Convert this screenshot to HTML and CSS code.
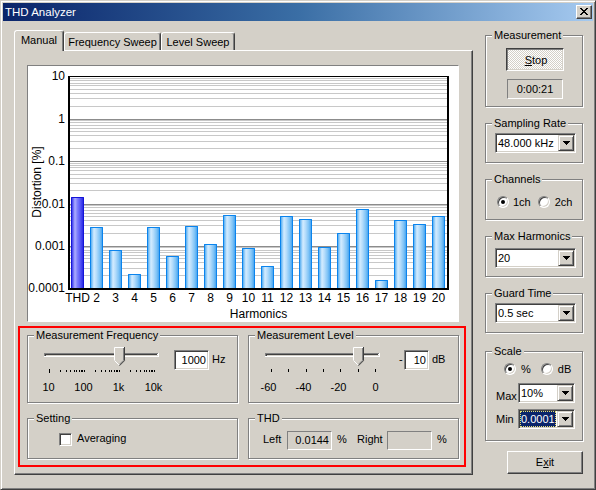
FILE: index.html
```html
<!DOCTYPE html>
<html lang="en">
<head>
<meta charset="utf-8">
<title>THD Analyzer</title>
<link rel="stylesheet" href="styles.css">
</head>
<body>
<div class="window">
  <div class="titlebar">
    <span class="title">THD Analyzer</span>
    <span class="close"><svg width="8" height="7" viewBox="0 0 8 7" shape-rendering="crispEdges"><path d="M0 0h2v1H0zM6 0h2v1H6zM1 1h2v1H1zM5 1h2v1H5zM2 2h4v1H2zM3 3h2v1H3zM2 4h4v1H2zM1 5h2v1H1zM5 5h2v1H5zM0 6h2v1H0zM6 6h2v1H6z" fill="#000"/></svg></span>
  </div>
  <div class="client">
    <div class="main">
      <div class="tabs">
        <div class="tab active">Manual</div>
        <div class="tab tab-fs">Frequency Sweep</div>
        <div class="tab tab-ls">Level Sweep</div>
      </div>
      <div class="panel">
        <div class="chart">
          <div class="ylabel" style="top:3px">10</div>
          <div class="ylabel" style="top:46px">1</div>
          <div class="ylabel" style="top:88px">0.1</div>
          <div class="ylabel" style="top:131px">0.01</div>
          <div class="ylabel" style="top:173px">0.001</div>
          <div class="ylabel" style="top:215px">0.0001</div>
          <div class="ytitle">Distortion [%]</div>
          <div class="plot">
            <svg class="grid" width="377" height="211" viewBox="0 0 377 211">
              <path stroke="#c8c8c8" stroke-width="1" fill="none" d="M0 1.5H377M0 3.5H377M0 6.5H377M0 8.5H377M0 12.5H377M0 16.5H377M0 21.5H377M0 29.5H377M0 43.5H377M0 45.5H377M0 48.5H377M0 51.5H377M0 54.5H377M0 58.5H377M0 64.5H377M0 71.5H377M0 86.5H377M0 88.5H377M0 90.5H377M0 93.5H377M0 97.5H377M0 101.5H377M0 106.5H377M0 113.5H377M0 128.5H377M0 130.5H377M0 133.5H377M0 136.5H377M0 139.5H377M0 143.5H377M0 148.5H377M0 156.5H377M0 170.5H377M0 173.5H377M0 175.5H377M0 178.5H377M0 181.5H377M0 185.5H377M0 191.5H377M0 198.5H377"/>
              <path stroke="#8c8c8c" stroke-width="1" fill="none" d="M0 42.5H377M0 84.5H377M0 127.5H377M0 169.5H377"/>
            </svg>
            <div class="bars">
              <div class="bar thd" style="height:91px"></div>
              <div class="bar" style="height:61px"></div>
              <div class="bar" style="height:38px"></div>
              <div class="bar" style="height:14px"></div>
              <div class="bar" style="height:61px"></div>
              <div class="bar" style="height:32px"></div>
              <div class="bar" style="height:62px"></div>
              <div class="bar" style="height:44px"></div>
              <div class="bar" style="height:73px"></div>
              <div class="bar" style="height:40px"></div>
              <div class="bar" style="height:22px"></div>
              <div class="bar" style="height:72px"></div>
              <div class="bar" style="height:69px"></div>
              <div class="bar" style="height:41px"></div>
              <div class="bar" style="height:55px"></div>
              <div class="bar" style="height:79px"></div>
              <div class="bar" style="height:8px"></div>
              <div class="bar" style="height:68px"></div>
              <div class="bar" style="height:64px"></div>
              <div class="bar" style="height:72px"></div>
            </div>
          </div>
          <div class="xlabels">
            <span class="xl"><span>THD</span></span>
            <span class="xl"><span>2</span></span>
            <span class="xl"><span>3</span></span>
            <span class="xl"><span>4</span></span>
            <span class="xl"><span>5</span></span>
            <span class="xl"><span>6</span></span>
            <span class="xl"><span>7</span></span>
            <span class="xl"><span>8</span></span>
            <span class="xl"><span>9</span></span>
            <span class="xl"><span>10</span></span>
            <span class="xl"><span>11</span></span>
            <span class="xl"><span>12</span></span>
            <span class="xl"><span>13</span></span>
            <span class="xl"><span>14</span></span>
            <span class="xl"><span>15</span></span>
            <span class="xl"><span>16</span></span>
            <span class="xl"><span>17</span></span>
            <span class="xl"><span>18</span></span>
            <span class="xl"><span>19</span></span>
            <span class="xl"><span>20</span></span>
          </div>
          <div class="xtitle">Harmonics</div>
        </div>

        <div class="redbox">
          <div class="group rowgroup g-freq">
            <span class="legend">Measurement Frequency</span>
            <div class="slidercol">
              <svg class="slider" width="130" height="30" viewBox="0 0 130 30" shape-rendering="crispEdges">
                <rect x="4" y="8" width="115" height="4" fill="#fff"/>
                <rect x="4" y="8" width="114" height="1" fill="#808080"/>
                <rect x="4" y="8" width="1" height="3" fill="#808080"/>
                <rect x="5" y="9" width="112" height="1" fill="#404040"/>
                <rect x="5" y="9" width="1" height="2" fill="#404040"/>
                <rect x="6" y="10" width="112" height="1" fill="#d4d0c8"/>
                <path fill="#000" d="M9 24h1v4H9zM20 25h1v2h-1zM26 25h1v2h-1zM30 25h1v2h-1zM34 25h1v2h-1zM36 25h1v2h-1zM39 25h1v2h-1zM41 25h1v2h-1zM42 25h1v2h-1zM44 25h1v2h-1zM55 25h1v2h-1zM61 25h1v2h-1zM65 25h1v2h-1zM69 25h1v2h-1zM71 25h1v2h-1zM74 25h1v2h-1zM76 25h1v2h-1zM77 25h1v2h-1zM79 25h1v2h-1zM90 25h1v2h-1zM96 25h1v2h-1zM100 25h1v2h-1zM104 25h1v2h-1zM106 25h1v2h-1zM109 25h1v2h-1zM111 25h1v2h-1zM112 25h1v2h-1zM114 25h1v2h-1z"/>
                <g shape-rendering="auto">
                  <path d="M74 2h11v13.5l-5.5 5.5-5.5-5.5z" fill="#d4d0c8"/>
                  <path d="M74.5 15.5V2.5H84" stroke="#fff" fill="none"/>
                  <path d="M74.8 15.8l4.5 4.5" stroke="#fff" fill="none"/>
                  <path d="M84.5 2v13.7l-5 5" stroke="#404040" fill="none"/>
                  <path d="M83.5 3v12.3l-4 4" stroke="#808080" fill="none"/>
                </g>
              </svg>
              <div class="ticklabels tl-freq"><span>10</span><span>100</span><span>1k</span><span>10k</span></div>
            </div>
            <div class="edit e-freq">1000</div>
            <span class="unit">Hz</span>
          </div>

          <div class="group rowgroup g-level">
            <span class="legend">Measurement Level</span>
            <div class="slidercol">
              <svg class="slider" width="130" height="30" viewBox="0 0 130 30" shape-rendering="crispEdges">
                <rect x="4" y="8" width="115" height="4" fill="#fff"/>
                <rect x="4" y="8" width="114" height="1" fill="#808080"/>
                <rect x="4" y="8" width="1" height="3" fill="#808080"/>
                <rect x="5" y="9" width="112" height="1" fill="#404040"/>
                <rect x="5" y="9" width="1" height="2" fill="#404040"/>
                <rect x="6" y="10" width="112" height="1" fill="#d4d0c8"/>
                <path fill="#000" d="M10 24h1v3h-1zM27 24h1v3h-1zM45 24h1v3h-1zM62 24h1v3h-1zM79 24h1v3h-1zM97 24h1v3h-1zM114 24h1v3h-1z"/>
                <g shape-rendering="auto">
                  <path d="M92 2h11v13.5l-5.5 5.5-5.5-5.5z" fill="#d4d0c8"/>
                  <path d="M92.5 15.5V2.5H102" stroke="#fff" fill="none"/>
                  <path d="M92.8 15.8l4.5 4.5" stroke="#fff" fill="none"/>
                  <path d="M102.5 2v13.7l-5 5" stroke="#404040" fill="none"/>
                  <path d="M101.5 3v12.3l-4 4" stroke="#808080" fill="none"/>
                </g>
              </svg>
              <div class="ticklabels tl-level"><span class="neg">-60</span><span class="neg">-40</span><span class="neg">-20</span><span>0</span></div>
            </div>
            <span class="minus">-</span>
            <div class="edit e-level">10</div>
            <span class="unit">dB</span>
          </div>

          <div class="group rowgroup g-set">
            <span class="legend">Setting</span>
            <span class="check"></span>
            <span class="clabel">Averaging</span>
          </div>

          <div class="group rowgroup g-thd">
            <span class="legend">THD</span>
            <span class="tlabel t-left">Left</span>
            <div class="field">0.0144</div>
            <span class="pct">%</span>
            <span class="tlabel t-right">Right</span>
            <div class="field"></div>
            <span class="pct">%</span>
          </div>
        </div>
      </div>
    </div>

    <div class="side">
      <div class="group g-meas">
        <span class="legend">Measurement</span>
        <div class="stop"><u>S</u>top</div>
        <div class="timer">0:00:21</div>
      </div>

      <div class="group g-rate">
        <span class="legend">Sampling Rate</span>
        <div class="combo c-wide"><div class="cval">48.000 kHz</div><div class="drop"><svg width="7" height="4" viewBox="0 0 7 4" shape-rendering="crispEdges"><path d="M0 0h7v1h-1v1h-1v1h-1v1h-1v-1h-1v-1h-1v-1h-1z" fill="#000"/></svg></div></div>
      </div>

      <div class="group g-chan">
        <span class="legend">Channels</span>
        <div class="radios r-chan">
          <span class="radio on"></span><span class="rlabel">1ch</span>
          <span class="radio r2"></span><span class="rlabel">2ch</span>
        </div>
      </div>

      <div class="group g-maxh">
        <span class="legend">Max Harmonics</span>
        <div class="combo c-wide"><div class="cval">20</div><div class="drop"><svg width="7" height="4" viewBox="0 0 7 4" shape-rendering="crispEdges"><path d="M0 0h7v1h-1v1h-1v1h-1v1h-1v-1h-1v-1h-1v-1h-1z" fill="#000"/></svg></div></div>
      </div>

      <div class="group g-guard">
        <span class="legend">Guard Time</span>
        <div class="combo c-wide"><div class="cval">0.5 sec</div><div class="drop"><svg width="7" height="4" viewBox="0 0 7 4" shape-rendering="crispEdges"><path d="M0 0h7v1h-1v1h-1v1h-1v1h-1v-1h-1v-1h-1v-1h-1z" fill="#000"/></svg></div></div>
      </div>

      <div class="group g-scale">
        <span class="legend">Scale</span>
        <div class="radios r-scale">
          <span class="radio on"></span><span class="rlabel">%</span>
          <span class="radio r2"></span><span class="rlabel">dB</span>
        </div>
        <div class="srow s-max">
          <span class="slabel">Max</span>
          <div class="combo c-narrow"><div class="cval">10%</div><div class="drop"><svg width="7" height="4" viewBox="0 0 7 4" shape-rendering="crispEdges"><path d="M0 0h7v1h-1v1h-1v1h-1v1h-1v-1h-1v-1h-1v-1h-1z" fill="#000"/></svg></div></div>
        </div>
        <div class="srow s-min">
          <span class="slabel">Min</span>
          <div class="combo c-narrow"><div class="cval"><span class="sel">0.0001</span></div><div class="drop"><svg width="7" height="4" viewBox="0 0 7 4" shape-rendering="crispEdges"><path d="M0 0h7v1h-1v1h-1v1h-1v1h-1v-1h-1v-1h-1v-1h-1z" fill="#000"/></svg></div></div>
        </div>
      </div>

      <div class="btn exit">E<u>x</u>it</div>
    </div>
  </div>
</div>
</body>
</html>
```

FILE: styles.css
```css
html, body {
  margin: 0;
  padding: 0;
  background: #d4d0c8;
}

.window {
  width: 596px;
  height: 490px;
  box-sizing: border-box;
  border: 1px solid;
  border-color: #d4d0c8 #404040 #404040 #d4d0c8;
  box-shadow: inset 1px 1px 0 #fff, inset -1px -1px 0 #808080;
  padding: 2px;
  background: #d4d0c8;
  font-family: "Liberation Sans", Arial, sans-serif;
  font-size: 11px;
  line-height: 13px;
  color: #000;
}

/* title bar */
.titlebar {
  height: 18px;
  display: flex;
  align-items: center;
  padding: 0 1px 0 2px;
  background: linear-gradient(90deg, #0a246a 0%, #3a6ea5 50%, #a6caf0 100%);
  color: #fff;
}
.title {
  flex: 1;
  font-size: 11.5px;
  line-height: 18px;
  white-space: nowrap;
}
.close {
  width: 16px;
  height: 14px;
  box-sizing: border-box;
  border: 1px solid;
  border-color: #fff #404040 #404040 #fff;
  box-shadow: inset -1px -1px 0 #808080;
  background: #d4d0c8;
  display: flex;
  align-items: center;
  justify-content: center;
  padding-bottom: 1px;
}
.close svg { display: block; }

/* client area */
.client {
  display: flex;
  align-items: flex-start;
  gap: 12px;
  padding: 9px 0 0 11px;
}
.main { width: 459px; }

/* tabs */
.tabs {
  display: flex;
  align-items: flex-end;
  height: 20px;
}
.tab {
  box-sizing: border-box;
  height: 18px;
  border: 1px solid;
  border-bottom: none;
  border-color: #fff #404040 transparent #fff;
  border-radius: 3px 3px 0 0;
  box-shadow: inset -1px 0 0 #808080;
  background: #d4d0c8;
  text-align: center;
  padding-top: 3px;
  white-space: nowrap;
}
.tab.active {
  width: 50px;
  height: 21px;
  margin-bottom: -1px;
  position: relative;
  z-index: 1;
}
.tab-fs { width: 97px; }
.tab-ls { width: 74px; }

.panel {
  width: 459px;
  height: 425px;
  box-sizing: border-box;
  border: 1px solid;
  border-color: #fff #404040 #404040 #fff;
  box-shadow: inset -1px -1px 0 #808080;
  overflow: hidden;
}

/* chart */
.chart {
  position: relative;
  width: 432px;
  height: 257px;
  box-sizing: border-box;
  margin: 14px 0 0 12px;
  border: 1px solid;
  border-color: #808080 #fff #fff #808080;
  background: #fff;
  font-size: 12px;
  line-height: 14px;
  overflow: hidden;
}
.ylabel {
  position: absolute;
  left: 0;
  width: 37px;
  text-align: right;
  white-space: nowrap;
}
.ytitle {
  position: absolute;
  left: 9px;
  top: 116px;
  white-space: nowrap;
  transform: translate(-50%, -50%) rotate(-90deg);
}
.plot {
  position: relative;
  width: 381px;
  height: 214px;
  box-sizing: border-box;
  margin: 10px 0 0 40px;
  border: 2px solid #000;
  border-top-width: 1px;
}
.grid {
  position: absolute;
  left: 0;
  top: 0;
  display: block;
}
.bars {
  position: relative;
  height: 211px;
  display: flex;
  align-items: flex-end;
  gap: 6px;
  padding-left: 1px;
}
.bar {
  width: 13px;
  flex-shrink: 0;
  box-sizing: border-box;
  border: 1px solid #0a84ee;
  border-bottom: none;
  border-radius: 1px 1px 0 0;
  background: linear-gradient(90deg, #58aef0 0%, #d4ecff 27%, #b4dcfb 50%, #7cc2f6 80%, #4aa4ee 100%);
}
.bar.thd {
  border-color: #1414d8;
  background: linear-gradient(90deg, #3a3aee 0%, #acacff 27%, #7c7cfc 50%, #4e4ef4 80%, #2a2ae2 100%);
}
.xlabels {
  display: flex;
  gap: 6px;
  margin: 1px 0 0 43px;
}
.xl {
  width: 13px;
  flex-shrink: 0;
  display: flex;
  justify-content: center;
  white-space: nowrap;
}
.xtitle {
  width: 381px;
  margin: 2px 0 0 40px;
  text-align: center;
}

/* red highlight box */
.redbox {
  width: 448px;
  height: 141px;
  box-sizing: border-box;
  margin: 4px 0 0 3px;
  border: 2px solid #ff0000;
  padding: 7px 0 0 7px;
  display: grid;
  grid-template-columns: 211px 211px;
  grid-template-rows: 68px 41px;
  column-gap: 10px;
  row-gap: 15px;
}

/* group boxes */
.group {
  position: relative;
  box-sizing: border-box;
  border: 1px solid #808080;
  box-shadow: inset 1px 1px 0 #fff, 1px 1px 0 #fff;
}
.legend {
  position: absolute;
  top: -7px;
  left: 6px;
  padding: 0 2px;
  background: #d4d0c8;
  white-space: nowrap;
}
.rowgroup {
  display: flex;
  align-items: flex-start;
}

/* sliders */
.slidercol {
  width: 130px;
  margin: 9px 0 0 12px;
  flex-shrink: 0;
}
.slider { display: block; }
.ticklabels {
  display: flex;
  margin-top: 6px;
}
.ticklabels span {
  width: 35px;
  flex-shrink: 0;
  text-align: center;
  box-sizing: border-box;
}
.tl-freq { margin-left: -9px; }
.tl-level { margin-left: -8px; }
.ticklabels .neg { padding-right: 4px; }

.edit {
  box-sizing: border-box;
  height: 20px;
  margin-top: 14px;
  border: 1px solid;
  border-color: #808080 #fff #fff #808080;
  box-shadow: inset 1px 1px 0 #404040, inset -1px -1px 0 #d4d0c8;
  background: #fff;
  line-height: 18px;
  text-align: right;
  padding-right: 2px;
}
.e-freq { width: 35px; margin-left: 4px; }
.e-level { width: 25px; margin-left: 1px; }
.unit {
  margin: 17px 0 0 3px;
}
.minus {
  width: 4px;
  margin: 17px 0 0 8px;
}

/* setting */
.check {
  width: 13px;
  height: 13px;
  box-sizing: border-box;
  margin: 14px 0 0 31px;
  border: 1px solid;
  border-color: #808080 #fff #fff #808080;
  box-shadow: inset 1px 1px 0 #404040, inset -1px -1px 0 #d4d0c8;
  background: #fff;
}
.clabel {
  margin: 13px 0 0 5px;
}

/* THD readout */
.tlabel {
  margin-top: 14px;
  white-space: nowrap;
}
.t-left { width: 24px; margin-left: 14px; }
.t-right { width: 30px; margin-left: 12px; }
.field {
  width: 45px;
  height: 19px;
  box-sizing: border-box;
  margin-top: 12px;
  border: 1px solid;
  border-color: #808080 #fff #fff #808080;
  background: #d4d0c8;
  line-height: 17px;
  text-align: right;
  padding-right: 2px;
}
.pct {
  width: 8px;
  margin: 14px 0 0 5px;
}

/* right column */
.side {
  width: 98px;
  margin-top: 5px;
}
.g-meas { height: 72px; }
.g-rate { height: 40px; margin-top: 16px; }
.g-chan { height: 41px; margin-top: 16px; }
.g-maxh { height: 41px; margin-top: 16px; }
.g-guard { height: 40px; margin-top: 16px; }
.g-scale { height: 90px; margin-top: 18px; }

.stop {
  width: 58px;
  height: 23px;
  box-sizing: border-box;
  margin: 12px 0 0 20px;
  border: 1px solid;
  border-color: #404040 #fff #fff #404040;
  box-shadow: inset 1px 1px 0 #808080, inset -1px -1px 0 #d4d0c8;
  background: repeating-conic-gradient(#ffffff 0 25%, #d4d0c8 0 50%) 0 0 / 2px 2px;
  text-align: center;
  padding: 5px 0 0 2px;
}
.timer {
  width: 56px;
  height: 20px;
  box-sizing: border-box;
  margin: 8px 0 0 21px;
  border: 1px solid;
  border-color: #808080 #fff #fff #808080;
  text-align: center;
  padding-top: 3px;
}

.combo {
  display: flex;
  height: 20px;
  box-sizing: border-box;
  border: 1px solid;
  border-color: #808080 #fff #fff #808080;
  box-shadow: inset 1px 1px 0 #404040, inset -1px -1px 0 #d4d0c8;
  padding: 1px;
  background: #fff;
}
.c-wide { width: 81px; margin-left: 9px; }
.g-rate .combo { margin-top: 9px; }
.g-maxh .combo { margin-top: 11px; }
.g-guard .combo { margin-top: 9px; }
.c-narrow { width: 57px; }
.cval {
  flex: 1;
  min-width: 0;
  overflow: hidden;
  white-space: nowrap;
  line-height: 16px;
  padding-left: 1px;
}
.cval .sel {
  display: block;
  margin-left: -1px;
  margin-right: 1px;
  padding-left: 1px;
  background: #0a246a;
  color: #fff;
  outline: 1px dotted #e8e070;
  outline-offset: -1px;
}
.drop {
  width: 16px;
  height: 16px;
  flex-shrink: 0;
  box-sizing: border-box;
  border: 1px solid;
  border-color: #d4d0c8 #404040 #404040 #d4d0c8;
  box-shadow: inset 1px 1px 0 #fff, inset -1px -1px 0 #808080;
  background: #d4d0c8;
  display: flex;
  align-items: center;
  justify-content: center;
}
.drop svg { display: block; }

.radios {
  display: flex;
  align-items: center;
  height: 12px;
}
.r-chan { margin-top: 16px; }
.r-scale { margin-top: 11px; }
.radio {
  position: relative;
  width: 12px;
  height: 12px;
  flex-shrink: 0;
  box-sizing: border-box;
  border: 1px solid;
  border-color: #808080 #fff #fff #808080;
  border-radius: 50%;
  box-shadow: inset 1px 1px 0 #404040, inset -1px -1px 0 #d4d0c8;
  background: #fff;
}
.radio.on::after {
  content: "";
  position: absolute;
  left: 3px;
  top: 3px;
  width: 4px;
  height: 4px;
  border-radius: 50%;
  background: #000;
}
.rlabel {
  margin-left: 4px;
  white-space: nowrap;
}
.r-chan .radio:first-child { margin-left: 11px; }
.r-chan .r2 { margin-left: 7px; }
.r-chan .r2 + .rlabel { margin-left: 5px; }
.r-scale .radio:first-child { margin-left: 18px; }
.r-scale .rlabel { margin-left: 5px; }
.r-scale .r2 { margin-left: 10px; }

.srow {
  display: flex;
  align-items: flex-start;
}
.s-max { margin-top: 8px; }
.s-min { margin-top: 6px; }
.slabel {
  width: 22px;
  margin-left: 10px;
}
.s-max .slabel { margin-top: 7px; }
.s-min .slabel { margin-top: 4px; }

.btn {
  width: 76px;
  height: 23px;
  box-sizing: border-box;
  border: 1px solid;
  border-color: #fff #404040 #404040 #fff;
  box-shadow: inset -1px -1px 0 #808080;
  background: #d4d0c8;
  text-align: center;
  line-height: 21px;
}
.exit {
  margin: 10px 0 0 auto;
}
```
